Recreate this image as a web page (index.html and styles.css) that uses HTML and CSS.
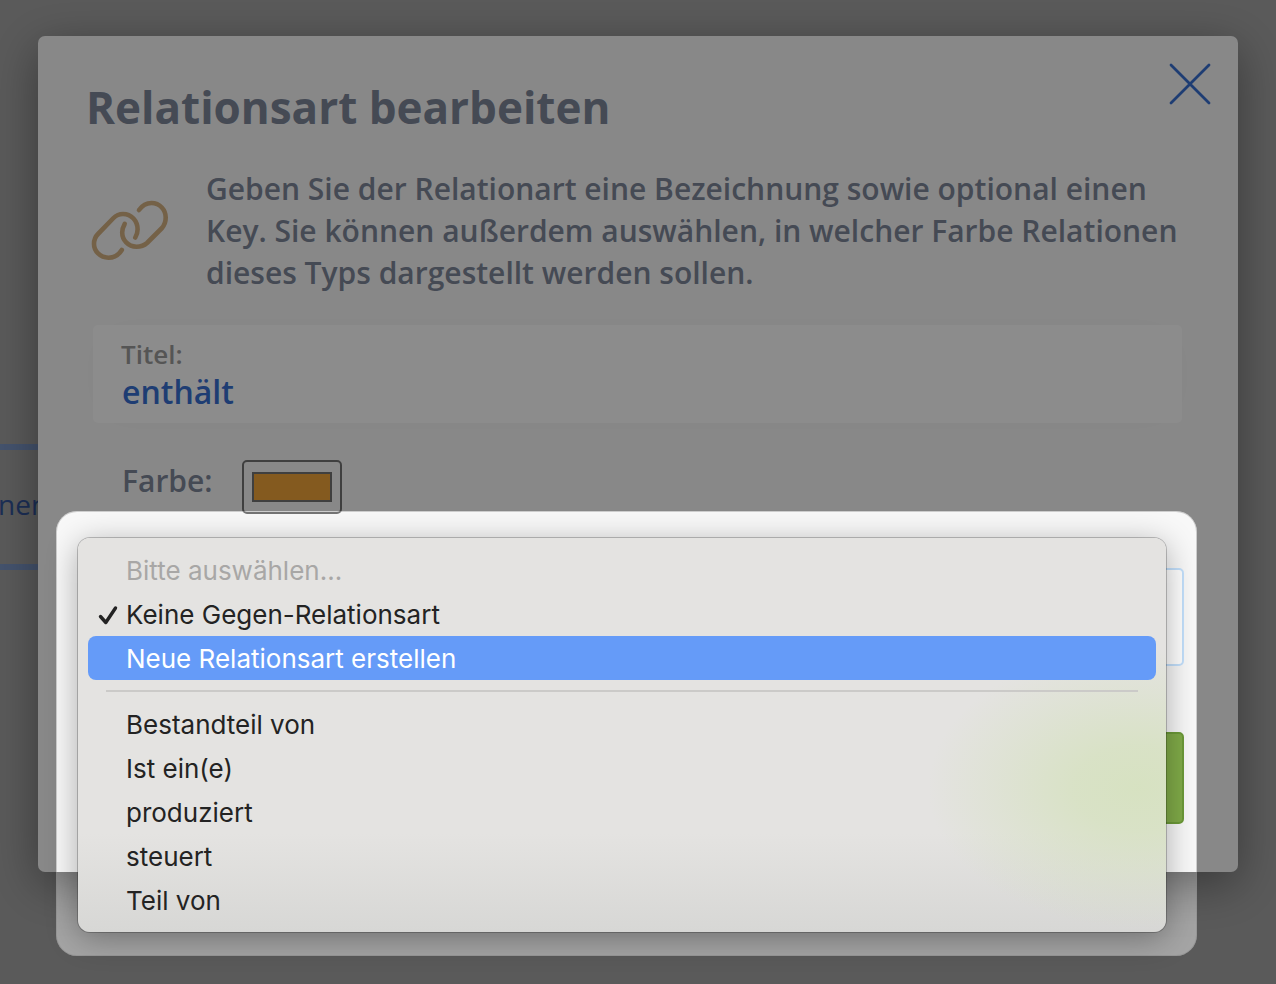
FILE: index.html
```html
<!DOCTYPE html>
<html lang="de">
<head>
<meta charset="utf-8">
<title>Relationsart bearbeiten</title>
<link rel="stylesheet" href="styles.css">
</head>
<body>
<div class="backdrop-card">nen</div>
<main class="dialog" role="dialog" aria-labelledby="dialog-title">
  <button class="close" type="button" aria-label="Schließen">
    <svg viewBox="0 0 42 42" width="42" height="42" fill="none" stroke="currentColor" stroke-width="2.8" stroke-linecap="round"><path d="M2 2 40 40M40 2 2 40"/></svg>
  </button>
  <h1 class="title" id="dialog-title">Relationsart bearbeiten</h1>
  <div class="intro">
    <svg class="link-icon" viewBox="0 0 80 64" width="80" height="64" fill="none" stroke="currentColor" stroke-width="4.6" stroke-linecap="round" stroke-linejoin="round">
      <path d="M31.8 51C28 57 23 58.7 18.5 58.7C10 58.7 4 52 4 45C4 41 5.500 37.500 8 35L23.500 19C26 16.500 29.500 15 33 15C41.500 15 47.600 22 47.600 30.500C47.600 33.500 46.700 36 45.300 38.500"/>
      <path d="M49 11C52.500 6 57 4 61.500 4C70 4 75.700 11 75.700 18.500C75.700 22.500 74.500 26 72 29L57 44C54 46.700 50.500 47.700 46.500 47.700C38 47.700 32.200 41 32.200 33.500C32.200 30 33.200 27.500 34.700 24.800"/>
    </svg>
    <p class="intro-text">Geben Sie der Relationart eine Bezeichnung sowie optional einen Key. Sie können außerdem auswählen, in welcher Farbe Relationen dieses Typs dargestellt werden sollen.</p>
  </div>
  <div class="field">
    <label class="field-label" for="titel">Titel:</label>
    <input class="field-input" id="titel" type="text" value="enthält">
  </div>
  <div class="color-row">
    <label class="color-label" for="farbe">Farbe:</label>
    <input class="color-input" id="farbe" type="color" value="#f0a43a">
  </div>
  <div class="select-wrap">
    <select class="select" aria-label="Gegen-Relationsart">
      <option>Keine Gegen-Relationsart</option>
    </select>
    <div class="spotlight">
      <ul class="menu" role="listbox" aria-label="Gegen-Relationsart">
        <li class="item disabled" role="option" aria-disabled="true">Bitte auswählen...</li>
        <li class="item checked" role="option" aria-selected="true">
          <svg class="check" viewBox="0 0 20 20" width="20" height="20" fill="none" stroke="currentColor" stroke-width="3.4" stroke-linecap="round" stroke-linejoin="round"><path d="M2.500 11.500 7.800 17.500 17.500 3"/></svg>Keine Gegen-Relationsart</li>
        <li class="item active" role="option">Neue Relationsart erstellen</li>
        <li class="separator" role="separator"></li>
        <li class="item" role="option">Bestandteil von</li>
        <li class="item" role="option">Ist ein(e)</li>
        <li class="item" role="option">produziert</li>
        <li class="item" role="option">steuert</li>
        <li class="item" role="option">Teil von</li>
      </ul>
    </div>
  </div>
  <div class="actions">
    <button class="save" type="button">Speichern</button>
  </div>
</main>
</body>
</html>
```
FILE: styles.css
```css
* {
  box-sizing: border-box;
}

body {
  margin: 0;
  min-height: 100vh;
  padding: 36px 38px;
  overflow: hidden;
  background: #a5a5a5;
  color: #7e879a;
  font-family: "Open Sans", "Noto Sans", sans-serif;
}

.backdrop-card {
  position: absolute;
  top: 444px;
  left: -202px;
  width: 600px;
  height: 126px;
  padding-left: 200px;
  border: 6px solid #7d98c8;
  border-left: 0;
  color: #33559c;
  font-size: 28px;
  line-height: 108px;
}

.dialog {
  position: relative;
  padding: 44px 56px 48px 55px;
  border-radius: 7px;
  background: #f8f8f8;
  box-shadow: 0 12px 48px rgba(0, 0, 0, 0.38);
}

.close {
  position: absolute;
  top: 27px;
  right: 27px;
  width: 42px;
  height: 42px;
  padding: 0;
  border: 0;
  background: none;
  color: #386fd1;
}

.close svg {
  display: block;
}

.title {
  margin: 0 0 0 -7px;
  font-size: 44px;
  font-weight: 700;
  line-height: 54px;
}

.intro {
  display: flex;
  align-items: center;
  gap: 36px;
  margin: 34px -8px 0 -3px;
}

.link-icon {
  flex: none;
  color: #d4b182;
}

.intro-text {
  margin: 0;
  font-size: 30px;
  font-weight: 600;
  line-height: 42px;
}

.field {
  display: flex;
  flex-direction: column;
  height: 98px;
  margin-top: 31px;
  padding: 12px 28px;
  border-radius: 5px;
  background: #fff;
  box-shadow: 0 0 48px rgba(0, 0, 0, 0.02);
}

.field-label {
  color: #9b9b9b;
  font-size: 26px;
  font-weight: 600;
  line-height: 35px;
}

.field-input {
  width: 100%;
  height: 40px;
  padding: 0 1px;
  border: 0;
  background: none;
  color: #386fd1;
  font: 600 32px/40px "Open Sans", sans-serif;
}

.color-row {
  display: flex;
  gap: 29px;
  margin-top: 37px;
  padding-left: 29px;
}

.color-label {
  font-size: 30px;
  font-weight: 600;
  line-height: 42px;
}

.color-input {
  width: 100px;
  height: 54px;
  padding: 10px 8px;
  border: 2px solid #747474;
  border-radius: 5px;
  background: none;
}

.color-input::-webkit-color-swatch-wrapper {
  padding: 0;
}

.color-input::-webkit-color-swatch {
  border: 2px solid #747474;
  border-radius: 0;
}

.select-wrap {
  position: relative;
  margin: 54px -2px 0 0;
}

.select {
  display: block;
  width: 100%;
  height: 98px;
  padding: 0 24px;
  border: 2px solid #c3e0fc;
  border-radius: 5px;
  appearance: none;
  background: #fff;
  color: #386fd1;
  font: 600 32px "Open Sans", sans-serif;
}

.spotlight {
  position: absolute;
  z-index: 2;
  top: -57px;
  right: -13px;
  left: -37px;
  padding: 27px 31px 24px 22px;
  border-radius: 21px;
  box-shadow: 0 0 0 2000px rgba(0, 0, 0, 0.45), inset 0 0 0 1px rgba(128, 128, 128, 0.35);
}

.menu {
  margin: 0;
  padding: 10px 10px 10px;
  border-radius: 12px;
  list-style: none;
  background:
    radial-gradient(ellipse 210px 140px at 1060px 250px, rgba(209, 225, 180, 0.7), rgba(209, 225, 180, 0.6) 30%, rgba(209, 225, 180, 0.25) 70%, rgba(209, 225, 180, 0)),
    linear-gradient(#e4e3e1 75%, #d7d7d5);
  box-shadow: 0 0 0 1px rgba(0, 0, 0, 0.22), 0 6px 32px rgba(0, 0, 0, 0.32);
  color: #232323;
  font: 26px/45px Inter, "Liberation Sans", sans-serif;
}

.item {
  position: relative;
  height: 44px;
  padding-left: 38px;
  border-radius: 8px;
}

.disabled {
  color: #a8a7a6;
}

.check {
  position: absolute;
  top: 13px;
  left: 10px;
}

.active {
  background: #659bf8;
  color: #fff;
}

.separator {
  height: 2px;
  margin: 10px 18px;
  background: #cbcac8;
}

.actions {
  display: flex;
  justify-content: flex-end;
  margin: 66px -2px 0 0;
}

.save {
  width: 280px;
  height: 92px;
  border: 2px solid #6c9a38;
  border-radius: 5px;
  background: #80ab48;
  color: #fff;
  font: 600 30px "Open Sans", sans-serif;
}
```
